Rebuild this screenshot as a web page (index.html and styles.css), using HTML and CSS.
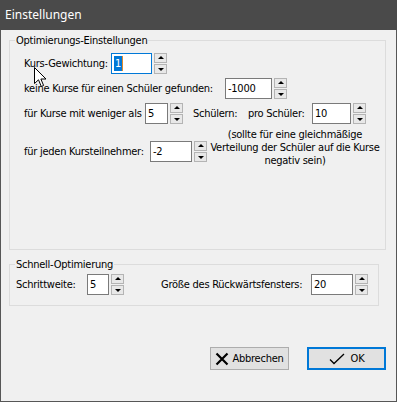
FILE: index.html
```html
<!DOCTYPE html>
<html lang="de">
<head>
    <meta charset="UTF-8">
    <title>Einstellungen</title>
    <link rel="stylesheet" href="styles.css">
</head>
<body>

<div class="window">
    <div class="titlebar">Einstellungen</div>

    <div class="client">
        <fieldset class="group group-opt">
            <legend>Optimierungs-Einstellungen</legend>
            <div class="rows">
                <div class="row">
                    <span class="label" style="width: 87px">Kurs-Gewichtung:</span>
                    <div class="edit focus" style="width: 41px"><span class="sel">1</span></div>
                    <div class="spin"><div class="up"></div><div class="down"></div></div>
                </div>
                <div class="row">
                    <span class="label" style="width: 201px">keine Kurse für einen Schüler gefunden:</span>
                    <div class="edit" style="width: 47px">-1000</div>
                    <div class="spin"><div class="up"></div><div class="down"></div></div>
                </div>
                <div class="row">
                    <span class="label" style="width: 121px">für Kurse mit weniger als</span>
                    <div class="edit" style="width: 23px">5</div>
                    <div class="spin"><div class="up"></div><div class="down"></div></div>
                    <span class="label" style="width: 55px; margin-left: 10px">Schülern:</span>
                    <span class="label" style="width: 64px">pro Schüler:</span>
                    <div class="edit" style="width: 39px">10</div>
                    <div class="spin"><div class="up"></div><div class="down"></div></div>
                </div>
                <div class="row row-note">
                    <div class="row">
                        <span class="label" style="width: 126px">für jeden Kursteilnehmer:</span>
                        <div class="edit" style="width: 42px">-2</div>
                        <div class="spin"><div class="up"></div><div class="down"></div></div>
                    </div>
                    <div class="note">(sollte für eine gleichmäßige<br>Verteilung der Schüler auf die Kurse<br>negativ sein)</div>
                </div>
            </div>
        </fieldset>

        <fieldset class="group group-fast">
            <legend>Schnell-Optimierung</legend>
            <div class="rows">
                <div class="row">
                    <span class="label" style="width: 71px">Schrittweite:</span>
                    <div class="edit" style="width: 22px">5</div>
                    <div class="spin"><div class="up"></div><div class="down"></div></div>
                    <span class="label" style="width: 150px; margin-left: 37px">Größe des Rückwärtsfensters:</span>
                    <div class="edit" style="width: 42px">20</div>
                    <div class="spin"><div class="up"></div><div class="down"></div></div>
                </div>
            </div>
        </fieldset>

        <div class="buttons">
            <button class="btn">
                <svg width="14" height="14" viewBox="0 0 14 14"><path d="M1.5 1.5 L12.5 12.5 M12.5 1.5 L1.5 12.5" stroke="#000" stroke-width="2.2" fill="none"/></svg>
                Abbrechen
            </button>
            <button class="btn default">
                <svg width="16" height="12" viewBox="0 0 16 12"><path d="M1 6.5 L5 10.5 L15 1" stroke="#000" stroke-width="1.3" fill="none"/></svg>
                OK
            </button>
        </div>
    </div>

    <svg class="cursor" width="14" height="21" viewBox="0 0 14 21">
        <path d="M0.5 0.5 L0.5 16.5 L4.5 12.8 L7.3 19.5 L9.6 18.5 L6.9 12 L12 12 Z" fill="#fff" stroke="#000" stroke-width="1"/>
    </svg>
</div>

</body>
</html>
```

FILE: styles.css
```css
body {
    margin: 0;
    padding: 0;
    font-family: "DejaVu Sans Condensed", "Liberation Sans", sans-serif;
    font-size: 11px;
    letter-spacing: -0.25px;
    color: #000;
}

.window {
    position: relative;
    width: 397px;
    height: 402px;
    box-sizing: border-box;
    background-color: #f0f0f0;
    border: 1px solid #565656;
    border-top: none;
}

.titlebar {
    height: 30px;
    margin: 0 -1px;
    padding-left: 5px;
    background-color: #4a4a4a;
    color: #fff;
    font-family: "Noto Sans", "Liberation Sans", sans-serif;
    font-size: 12px;
    letter-spacing: 0;
    line-height: 30px;
}

.client {
    padding-top: 4px;
}

.group {
    margin: 0 0 0 8px;
    padding: 0 0 0 5px;
    border: 1px solid #dcdcdc;
    box-sizing: border-box;
    min-width: 0;
}

.group legend {
    padding: 0 1px;
    line-height: 13px;
}

.group-opt {
    width: 377px;
    height: 216px;
}

.group-opt .rows {
    margin-top: 6px;
    padding-left: 9px;
}

.group-fast {
    width: 370px;
    height: 48px;
    margin-top: 8px;
}

.group-fast .rows {
    margin-top: 3px;
    padding-left: 1px;
}

.rows {
    display: flex;
    flex-direction: column;
    gap: 4px;
}

.row {
    display: flex;
    align-items: center;
}

.row-note {
    align-items: flex-start;
}

.row-note > .row {
    margin-top: 13px;
}

.label {
    white-space: nowrap;
    flex: none;
}

.edit {
    flex: none;
    height: 21px;
    box-sizing: border-box;
    border: 1px solid #7a7a7a;
    background-color: #fff;
    padding-left: 2px;
    line-height: 19px;
    white-space: nowrap;
}

.edit.focus {
    border-color: #0078d7;
}

.sel {
    display: inline-block;
    background-color: #0078d7;
    color: #fff;
    line-height: 15px;
    padding: 0 1px;
    border-right: 1px solid #e08a2c;
}

.spin {
    flex: none;
    display: flex;
    flex-direction: column;
    gap: 1px;
    margin-left: 2px;
}

.spin div {
    position: relative;
    width: 13px;
    height: 10px;
    box-sizing: border-box;
    border: 1px solid #b4b4b4;
    background-color: #e8e8e8;
}

.spin div::after {
    content: "";
    position: absolute;
    left: 3px;
    width: 0;
    height: 0;
    border-left: 3px solid transparent;
    border-right: 3px solid transparent;
}

.spin .up::after {
    top: 2px;
    border-bottom: 3px solid #000;
}

.spin .down::after {
    top: 3px;
    border-top: 3px solid #000;
}

.note {
    width: 176px;
    text-align: center;
    line-height: 13px;
    white-space: nowrap;
}

.buttons {
    display: flex;
    justify-content: flex-end;
    gap: 18px;
    margin-top: 41px;
    padding-right: 10px;
}

.btn {
    display: flex;
    align-items: center;
    justify-content: center;
    gap: 3px;
    width: 79px;
    height: 23px;
    padding: 0;
    border: 1px solid #adadad;
    background-color: #e1e1e1;
    font-family: inherit;
    font-size: 11px;
    letter-spacing: inherit;
    color: #000;
}

.btn.default {
    border: 2px solid #0078d7;
    gap: 6px;
}

.cursor {
    position: absolute;
    left: 33px;
    top: 67px;
}
```
